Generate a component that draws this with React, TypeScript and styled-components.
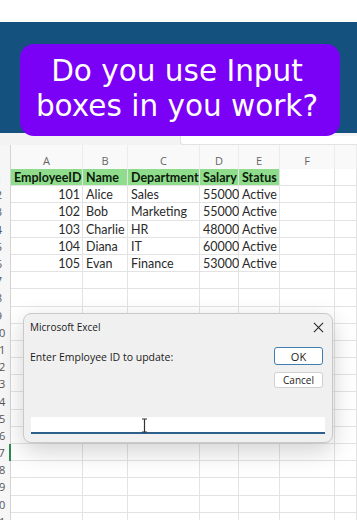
import React from "react";
import styled, { createGlobalStyle } from "styled-components";

const GlobalStyle = createGlobalStyle`
  html, body {
    margin: 0;
    padding: 0;
    background: #ffffff;
  }
  body {
    font-family: "Open Sans", "Noto Sans", sans-serif;
  }
`;

const Page = styled.div`
  position: relative;
  width: 357px;
  height: 520px;
  overflow: hidden;
  background: #ffffff;
`;

const TopGap = styled.div`
  height: 22px;
  background: #ffffff;
`;

const Banner = styled.div`
  height: 111px;
  background: #14517f;
`;

const FormulaStrip = styled.div`
  height: 12px;
  background: #f3f3f3;
  display: flex;
  justify-content: flex-end;
  align-items: flex-end;
`;

const FormulaBox = styled.div`
  width: 176px;
  height: 8px;
  background: #ffffff;
  border-left: 1px solid #e2e2e2;
  border-bottom: 1px solid #e2e2e2;
  border-bottom-left-radius: 3px;
`;

const Caption = styled.div`
  position: absolute;
  left: 20px;
  top: 44px;
  width: 320px;
  height: 92px;
  box-sizing: border-box;
  background: #7a00f6;
  border-radius: 14px;
  color: #ffffff;
  font-family: "DejaVu Sans", "Noto Sans", sans-serif;
  font-size: 29.5px;
  line-height: 35px;
  text-align: center;
  padding-top: 10px;
  padding-right: 6px;
  white-space: nowrap;
`;

const COLS = [72, 45, 72, 39, 41, 55];

const Sheet = styled.div`
  display: grid;
  grid-template-columns: 11px ${COLS.map((c) => `${c}px`).join(" ")} 1fr;
  grid-template-rows: 24px;
  grid-auto-rows: 17.2px;
  font-family: "Lato", "Noto Sans", sans-serif;
  font-size: 12.5px;
  color: #222222;
`;

const Corner = styled.div`
  background: #f6f6f6;
  border-right: 1px solid #d4d4d4;
`;

const ColHead = styled.div`
  background: #f9f9f9;
  color: #666666;
  font-family: "Open Sans", "Noto Sans", sans-serif;
  font-size: 11px;
  display: flex;
  align-items: center;
  justify-content: center;
  padding-top: 6px;
  box-sizing: border-box;
  border-right: 1px solid #ececec;
`;

const RowHead = styled.div<{ $active?: boolean }>`
  background: #f6f6f6;
  border-right: ${(p) => (p.$active ? "2px solid #2d8a4e" : "1px solid #d4d4d4")};
  color: #555555;
  font-family: "Open Sans", "Noto Sans", sans-serif;
  font-size: 11px;
  display: flex;
  align-items: center;
`;

const RowNum = styled.span`
  display: block;
  width: 24px;
  margin-left: -12px;
  text-align: center;
`;

const Cell = styled.div<{ $align?: "left" | "right"; $head?: boolean }>`
  box-sizing: border-box;
  border-right: 1px solid #e3e3e3;
  border-bottom: 1px solid #e3e3e3;
  background: ${(p) => (p.$head ? "#8fdd8c" : "#ffffff")};
  font-weight: ${(p) => (p.$head ? 700 : 400)};
  color: ${(p) => (p.$head ? "#0c1a0c" : "#2a2a2a")};
  text-align: ${(p) => p.$align ?? "left"};
  padding: 1px 2px 0 3px;
  line-height: 16px;
  white-space: nowrap;
`;

const Dialog = styled.div`
  position: absolute;
  left: 23px;
  top: 313px;
  width: 310px;
  height: 130px;
  box-sizing: border-box;
  background: #f0f0f0;
  border: 1px solid #c9c9c9;
  border-radius: 8px;
  box-shadow: 0 8px 24px rgba(0, 0, 0, 0.18);
  font-family: "Open Sans", "Noto Sans", sans-serif;
  font-size: 10.5px;
  color: #1b1b1b;
  display: flex;
  flex-direction: column;
  padding: 4px 7px 8px 6px;
`;

const TitleBar = styled.div`
  display: flex;
  justify-content: space-between;
  align-items: center;
  height: 18px;
`;

const Title = styled.span`
  font-size: 10px;
`;

const CloseIcon = styled.svg`
  width: 11px;
  height: 11px;
  margin-right: 1px;
`;

const Body = styled.div`
  display: flex;
  justify-content: space-between;
  margin-top: 11px;
`;

const Prompt = styled.div`
  padding-top: 3px;
`;

const Buttons = styled.div`
  display: flex;
  flex-direction: column;
  gap: 7px;
  margin-right: 2px;
`;

const Button = styled.div<{ $focused?: boolean }>`
  width: 49px;
  height: ${(p) => (p.$focused ? "18px" : "16px")};
  box-sizing: border-box;
  background: #ffffff;
  border: 1px solid ${(p) => (p.$focused ? "#3e7cb1" : "#d0d0d0")};
  border-radius: 3px;
  display: flex;
  align-items: center;
  justify-content: center;
  font-size: ${(p) => (p.$focused ? "11px" : "10px")};
`;

const InputBox = styled.div`
  margin-top: auto;
  margin-left: 1px;
  height: 15px;
  background: #ffffff;
  border-bottom: 2px solid #2c5f8c;
  position: relative;
`;

const IBeam = styled.svg`
  position: absolute;
  left: 110px;
  top: 1px;
  width: 7px;
  height: 15px;
`;

const HEAD = ["EmployeeID", "Name", "Department", "Salary", "Status"];
const DATA: [number, string, string, number, string][] = [
  [101, "Alice", "Sales", 55000, "Active"],
  [102, "Bob", "Marketing", 55000, "Active"],
  [103, "Charlie", "HR", 48000, "Active"],
  [104, "Diana", "IT", 60000, "Active"],
  [105, "Evan", "Finance", 53000, "Active"],
];
const LETTERS = ["A", "B", "C", "D", "E", "F", ""];
const ROWS = 21;

export default function App() {
  const rows: React.ReactNode[] = [];
  for (let r = 1; r <= ROWS; r++) {
    let cells: { text: string | number; align?: "left" | "right"; head?: boolean }[] = [];
    if (r === 1) {
      cells = HEAD.map((h) => ({ text: h, head: true }));
    } else if (r <= DATA.length + 1) {
      const d = DATA[r - 2];
      cells = [
        { text: d[0], align: "right" },
        { text: d[1] },
        { text: d[2] },
        { text: d[3], align: "right" },
        { text: d[4] },
      ];
    }
    while (cells.length < 7) cells.push({ text: "" });
    rows.push(
      <React.Fragment key={r}>
        <RowHead $active={r === 17}>
          <RowNum>{r}</RowNum>
        </RowHead>
        {cells.map((c, i) => (
          <Cell key={i} $align={c.align} $head={c.head}>
            {c.text}
          </Cell>
        ))}
      </React.Fragment>
    );
  }

  return (
    <Page>
      <GlobalStyle />
      <TopGap />
      <Banner />
      <FormulaStrip>
        <FormulaBox />
      </FormulaStrip>
      <Sheet>
        <Corner />
        {LETTERS.map((l, i) => (
          <ColHead key={i}>{l}</ColHead>
        ))}
        {rows}
      </Sheet>

      <Caption>
        Do you use Input
        <br />
        boxes in you work?
      </Caption>

      <Dialog>
        <TitleBar>
          <Title>Microsoft Excel</Title>
          <CloseIcon viewBox="0 0 12 12">
            <path d="M1 1 L11 11 M11 1 L1 11" stroke="#222" strokeWidth="1.1" fill="none" />
          </CloseIcon>
        </TitleBar>
        <Body>
          <Prompt>Enter Employee ID to update:</Prompt>
          <Buttons>
            <Button $focused>OK</Button>
            <Button>Cancel</Button>
          </Buttons>
        </Body>
        <InputBox>
          <IBeam viewBox="0 0 7 15">
            <path d="M1 1 H6 M3.5 1 V14 M1 14 H6" stroke="#333" strokeWidth="1.2" fill="none" />
          </IBeam>
        </InputBox>
      </Dialog>
    </Page>
  );
}
